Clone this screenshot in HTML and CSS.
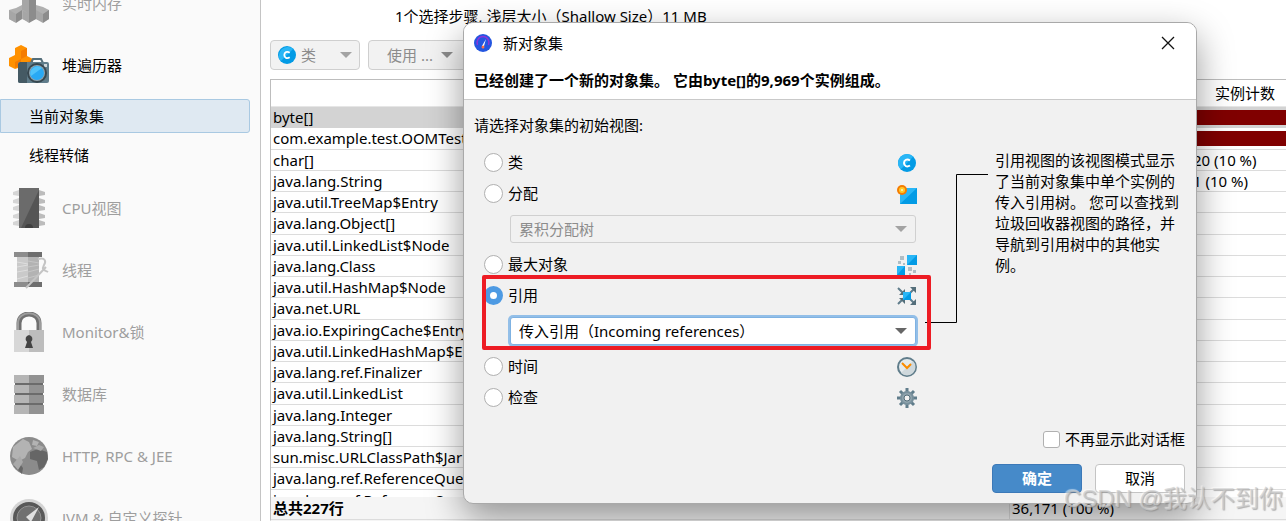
FILE: index.html
```html
<!DOCTYPE html>
<html lang="zh-CN">
<head>
    <meta charset="UTF-8">
    <meta name="viewport" content="width=device-width, initial-scale=1.0">
    <title>新对象集</title>
    <link rel="stylesheet" href="styles.css">
</head>
<body>
    <div class="app">
        <nav class="sidebar">
            <a href="#" class="nav-item">
                <svg class="nav-icon" viewBox="0 0 40 40">
                    <path fill="#b0b0b0" d="M7 25l6-3V12l7-4 7 4v10l7 2 6 3v9l-6 3-7-3-7 3-7-3-7 3-6-3v-9z"/>
                    <path fill="#a6a6a6" d="M13 12l7 4v15l-7-4zM7 31l-7-4v9l7 4zM20 31l-6-4v9l6 4zM34 31l-7-4v9l7 4z"/>
                    <path fill="#8c8c8c" d="M27 12l-7 4v15l7-4zM7 31l6-4v9l-6 4zM20 31l7-4v9l-7 4zM34 31l6-4v9l-6 4z"/>
                </svg>
                <span>实时内存</span>
            </a>
            <a href="#" class="nav-item active">
                <svg class="nav-icon" viewBox="0 0 40 40">
                    <path fill="#ff9100" d="M12 0l6 3v8l6 3v6l-6 4-6-2-6 2-6-3v-8l6-3V3z"/>
                    <path fill="#f57c00" d="M12 6l6-3v8l-6 3zM6 17l6-3v6l-6 3zM18 17l6-3v6l-6 4z"/>
                    <path fill="none" stroke="#546e7a" stroke-width="2" d="M22 18l2-4h8l2 4"/>
                    <rect x="9" y="17" width="31" height="21" rx="2" fill="#607d8b"/>
                    <path fill="#455a64" d="M11 17h7v21h-7a2 2 0 0 1-2-2V19z"/>
                    <rect x="35" y="19" width="3" height="3" fill="#cfd8dc"/>
                    <circle cx="28" cy="28" r="10" fill="#37474f"/>
                    <circle cx="28" cy="28" r="8" fill="#90a4ae"/>
                    <circle cx="28" cy="28" r="7" fill="#29a9f4"/>
                    <path fill="#50c3fa" d="M22 31a7 7 0 0 1 11-8z"/>
                </svg>
                <span>堆遍历器</span>
            </a>
            <a href="#" class="nav-sub selected">当前对象集</a>
            <a href="#" class="nav-sub">线程转储</a>
            <a href="#" class="nav-item">
                <svg class="nav-icon" viewBox="0 0 40 40">
                    <path fill="#d5d5d5" d="M10 2v6l-6-1V4zM10 10v6l-6-1v-3zM10 17v6l-6-1v-3zM10 25v6l-6-1v-3zM10 32v6l-6-1v-3z"/>
                    <path fill="#bcbcbc" d="M30 2v6l6-1V4zM30 10v6l6-1v-3zM30 17v6l6-1v-3zM30 25v6l6-1v-3zM30 32v6l6-1v-3z"/>
                    <rect x="10" width="20" height="40" fill="#555"/>
                    <path fill="#6b6b6b" d="M10 0h20v2L12 40h-2z"/>
                    <path fill="#3f3f3f" d="M16 40a4 4 0 0 1 8 0z"/>
                </svg>
                <span>CPU视图</span>
            </a>
            <a href="#" class="nav-item">
                <svg class="nav-icon" viewBox="0 0 40 40">
                    <rect x="8" y="7" width="11" height="26" fill="#cacaca"/>
                    <rect x="19" y="7" width="11" height="26" fill="#b3b3b3"/>
                    <path fill="none" stroke="#dedede" d="M8 12l11 2M8 17l11-2M8 22l11-2M8 29l11-3"/>
                    <path fill="none" stroke="#c6c6c6" d="M19 11l11 2M19 17l11-2M19 22l11-3M19 28l11-3"/>
                    <path fill="#8c8c8c" d="M5 2h14v5H5zM5 32h14v5H5z"/>
                    <path fill="#6e6e6e" d="M19 2h14v5H19zM19 32h14v5H19z"/>
                    <path fill="none" stroke="#c4c4c4" stroke-width="2" d="M29 9c8-2 8 3 6 6-3 6 1 5 4 7M17 38l20-21"/>
                </svg>
                <span>线程</span>
            </a>
            <a href="#" class="nav-item">
                <svg class="nav-icon" viewBox="0 0 40 40">
                    <path fill="none" stroke="#707070" stroke-width="5" d="M10 20V11c0-12 20-12 20 0v9"/>
                    <path fill="none" stroke="#9c9c9c" stroke-width="2" d="M9 18v-7c0-13 22-13 22 0v7"/>
                    <rect x="5" y="18" width="15" height="22" fill="#d7d7d7"/>
                    <rect x="20" y="18" width="15" height="22" fill="#bdbdbd"/>
                    <path fill="#444" d="M20 23a4 4 0 0 1 2 7l2 6h-8l2-6a4 4 0 0 1 2-7z"/>
                </svg>
                <span>Monitor&amp;锁</span>
            </a>
            <a href="#" class="nav-item">
                <svg class="nav-icon" viewBox="0 0 40 40">
                    <path fill="#6b6b6b" d="M6 8h28v24H6z"/>
                    <path fill="#b5b5b5" d="M5 1h15v8H5zM5 11h15v8H5zM5 21h15v8H5zM5 31h15v9H5z"/>
                    <path fill="#929292" d="M20 1h15v8H20zM20 11h15v8H20zM20 21h15v8H20zM20 31h15v9H20z"/>
                </svg>
                <span>数据库</span>
            </a>
            <a href="#" class="nav-item">
                <svg class="nav-icon" viewBox="0 0 40 40">
                    <circle cx="20" cy="20" r="19" fill="#8b8b8b"/>
                    <path fill="#b3b3b3" d="M4 11L14 3l6 3 3 7-4 3-3 6-6 3-7-4zM24 4l6 2-2 4-5-1z"/>
                    <path fill="#666" d="M21 16l8-3 9 3 1 7-4 8-5 3-2-9-7-2zM5 30l6-2 3 4-1 6z"/>
                    <path fill="#a9a9a9" d="M24 12l6-3 5 2-3 4zM4 28l7-8 3 6-5 8z"/>
                </svg>
                <span>HTTP, RPC &amp; JEE</span>
            </a>
            <a href="#" class="nav-item">
                <svg class="nav-icon" viewBox="0 0 40 40">
                    <circle cx="20" cy="20" r="19" fill="#d4d4d4"/>
                    <circle cx="20" cy="20" r="16" fill="#585858"/>
                    <circle cx="20" cy="20" r="12" fill="#707070" stroke="#929292"/>
                    <path fill="#e0e0e0" d="M30 9L17 19l5 5z"/>
                </svg>
                <span>JVM &amp; 自定义探针</span>
            </a>
        </nav>

        <main class="content">
            <div class="summary">1个选择步骤, 浅层大小（Shallow Size）11 MB</div>
            <div class="toolbar">
                <button type="button" class="tool-btn" disabled>
                    <svg class="class-icon" viewBox="0 0 20 20">
                        <circle cx="10" cy="10" r="10" fill="#039be5"/>
                        <path fill="#29b6f6" d="M3 17A10 10 0 0 1 17 3z"/>
                        <path fill="none" stroke="#fff" stroke-width="2" d="M13 7.500C10 5.500 7 7 7 10s3 4.500 6 2.500"/>
                    </svg>
                    <span>类</span>
                    <i class="arrow"></i>
                </button>
                <button type="button" class="tool-btn wide" disabled>
                    <span>使用 ...</span>
                    <i class="arrow dark"></i>
                </button>
            </div>
            <div class="grid">
                <div class="grid-scroll">
                    <table class="objects">
                        <colgroup><col class="col-name"><col class="col-count"></colgroup>
                        <thead>
                            <tr><th></th><th>实例计数</th></tr>
                        </thead>
                        <tbody>
                            <tr class="current"><td>byte[]</td><td><div class="bar"></div></td></tr>
                            <tr><td>com.example.test.OOMTest</td><td><div class="bar"></div></td></tr>
                            <tr><td>char[]</td><td><span class="count">20 (10 %)</span></td></tr>
                            <tr><td>java.lang.String</td><td><span class="count">1 (10 %)</span></td></tr>
                            <tr><td>java.util.TreeMap$Entry</td><td></td></tr>
                            <tr><td>java.lang.Object[]</td><td></td></tr>
                            <tr><td>java.util.LinkedList$Node</td><td></td></tr>
                            <tr><td>java.lang.Class</td><td></td></tr>
                            <tr><td>java.util.HashMap$Node</td><td></td></tr>
                            <tr><td>java.net.URL</td><td></td></tr>
                            <tr><td>java.io.ExpiringCache$Entry</td><td></td></tr>
                            <tr><td>java.util.LinkedHashMap$Entry</td><td></td></tr>
                            <tr><td>java.lang.ref.Finalizer</td><td></td></tr>
                            <tr><td>java.util.LinkedList</td><td></td></tr>
                            <tr><td>java.lang.Integer</td><td></td></tr>
                            <tr><td>java.lang.String[]</td><td></td></tr>
                            <tr><td>sun.misc.URLClassPath$JarLoader</td><td></td></tr>
                            <tr><td>java.lang.ref.ReferenceQueue</td><td></td></tr>
                            <tr><td>java.lang.ref.ReferenceQueue$Lock</td><td></td></tr>
                        </tbody>
                    </table>
                </div>
                <table class="objects totals">
                    <colgroup><col class="col-name"><col class="col-count"></colgroup>
                    <tbody>
                        <tr><td><b>总共227行</b></td><td>36,171 (100 %)</td></tr>
                    </tbody>
                </table>
            </div>
        </main>
    </div>

    <form class="dialog" role="dialog" aria-labelledby="dialog-title">
        <header class="dialog-header">
            <div class="title-bar">
                <svg class="app-icon" viewBox="0 0 18 18">
                    <circle cx="9" cy="9" r="9" fill="#2456e0"/>
                    <path fill="none" stroke="#8d35d8" stroke-width="1.500" d="M3.500 11a6 6 0 1 1 11 0"/>
                    <path fill="#fff" d="M12 5l-2 7H8z"/>
                    <circle cx="9" cy="13" r="1.500" fill="#ff7043"/>
                </svg>
                <span id="dialog-title">新对象集</span>
                <button type="button" class="close" aria-label="关闭">
                    <svg viewBox="0 0 14 14"><path fill="none" stroke="#111" stroke-width="1.300" d="M1 1l12 12M13 1L1 13"/></svg>
                </button>
            </div>
            <p class="message">已经创建了一个新的对象集。 它由byte[]的9,969个实例组成。</p>
        </header>

        <div class="dialog-body">
            <div class="options">
                <p class="prompt">请选择对象集的初始视图:</p>
                <div class="option">
                    <input type="radio" name="view" id="view-class"><label for="view-class">类</label>
                    <svg class="option-icon" viewBox="0 0 20 20">
                        <circle cx="10" cy="10" r="9" fill="#039be5"/>
                        <path fill="#29b6f6" d="M3.600 16.400A9 9 0 0 1 16.400 3.600z"/>
                        <path fill="none" stroke="#fff" stroke-width="2" d="M13 7.500C10 5.500 7 7 7 10s3 4.500 6 2.500"/>
                    </svg>
                </div>
                <div class="option">
                    <input type="radio" name="view" id="view-alloc"><label for="view-alloc">分配</label>
                    <svg class="option-icon" viewBox="0 0 20 20">
                        <path fill="#039be5" d="M3 4h17v16H3z"/>
                        <path fill="#29b6f6" d="M3 4h17L3 20z"/>
                        <circle cx="5" cy="6" r="5" fill="#f57c00"/>
                        <circle cx="5" cy="6" r="3" fill="#ffca28"/>
                        <circle cx="5" cy="6" r="1" fill="#fff3c0"/>
                    </svg>
                </div>
                <div class="select-box disabled">
                    <select aria-label="分配" disabled><option>累积分配树</option></select>
                    <i class="arrow"></i>
                </div>
                <div class="option">
                    <input type="radio" name="view" id="view-biggest"><label for="view-biggest">最大对象</label>
                    <svg class="option-icon" viewBox="0 0 20 20">
                        <path fill="#039be5" d="M10 0h10v10H10zM0 11h8v9H0z"/>
                        <path fill="#29b6f6" d="M10 0h10L10 10zM0 11h8l-8 9z"/>
                        <path fill="#b0bec5" d="M3 1h4v4H3zM1 6h3v3H1zM6 8h2v2H6zM11 12h4v4h-4zM16 15h3v3h-3zM12 18h2v2h-2z"/>
                    </svg>
                </div>
                <div class="highlighted">
                    <div class="option">
                        <input type="radio" name="view" id="view-refs" checked><label for="view-refs">引用</label>
                        <svg class="option-icon" viewBox="0 0 20 20">
                            <path stroke="#607d8b" stroke-width="2" d="M1 2l6 6M12 8l6-6M1 18l6-6M12 12l6 6"/>
                            <path fill="#546e7a" d="M8 3v6H2zM19 1v6l-6-6zM2 12h6v6zM19 19h-6l6-6z"/>
                            <path fill="#039be5" d="M6 6h8v8H6z"/>
                            <path fill="#29b6f6" d="M6 6h8l-8 8z"/>
                        </svg>
                    </div>
                    <div class="select-box focused">
                        <select aria-label="引用"><option>传入引用（Incoming references）</option></select>
                        <i class="arrow dark"></i>
                    </div>
                </div>
                <div class="option">
                    <input type="radio" name="view" id="view-time"><label for="view-time">时间</label>
                    <svg class="option-icon" viewBox="0 0 20 20">
                        <circle cx="10" cy="10" r="9" fill="#e4eaed" stroke="#607d8b" stroke-width="2"/>
                        <path fill="#cfd8dc" d="M4 16A8 8 0 0 0 16 4z"/>
                        <path fill="none" stroke="#fb8c00" stroke-width="2" d="M5 6l5 5 4-4"/>
                    </svg>
                </div>
                <div class="option">
                    <input type="radio" name="view" id="view-inspect"><label for="view-inspect">检查</label>
                    <svg class="option-icon" viewBox="0 0 20 20">
                        <path stroke="#607d8b" stroke-width="3" d="M10 0v20M0 10h20M3 3l14 14M17 3L3 17"/>
                        <circle cx="10" cy="10" r="7" fill="#78909c"/>
                        <circle cx="10" cy="10" r="5" fill="#90a4ae"/>
                        <circle cx="10" cy="10" r="3" fill="#f1f1f1" stroke="#546e7a"/>
                    </svg>
                </div>
            </div>

            <svg class="connector" viewBox="0 0 64 150">
                <path fill="none" stroke="#000" d="M0 149.500H31.500V1.500H63"/>
            </svg>

            <p class="help">引用视图的该视图模式显示了当前对象集中单个实例的传入引用树。 您可以查找到垃圾回收器视图的路径，并导航到引用树中的其他实例。</p>
        </div>

        <footer class="dialog-footer">
            <div class="remember">
                <input type="checkbox" id="dont-show"><label for="dont-show">不再显示此对话框</label>
            </div>
            <div class="buttons">
                <button type="submit" class="btn primary">确定</button>
                <button type="button" class="btn">取消</button>
            </div>
        </footer>
    </form>

    <div class="watermark">CSDN @我认不到你</div>
</body>
</html>
```
FILE: styles.css
```css
* {
    box-sizing: border-box;
}

body {
    margin: 0;
    height: 100vh;
    overflow: hidden;
    position: relative;
    background: #fff;
    color: #000;
    font-family: "Noto Sans", "Noto Sans CJK SC", sans-serif;
    font-size: 15px;
    line-height: 21px;
}

p {
    margin: 0;
}

button,
select,
input {
    font: inherit;
    margin: 0;
}

.app {
    display: flex;
    height: 100%;
    overflow: hidden;
}

/* Sidebar */
.sidebar {
    flex: 0 0 261px;
    margin-top: -28px;
    background: #fafafa;
    border-right: 1px solid #c4c4c4;
}

.nav-item {
    display: flex;
    align-items: center;
    gap: 13px;
    height: 62px;
    padding-left: 9px;
    color: #9e9e9e;
    text-decoration: none;
}

.nav-item.active {
    color: #000;
}

.nav-icon {
    width: 40px;
    height: 40px;
}

.nav-sub {
    display: flex;
    align-items: center;
    height: 34px;
    margin: 3px 10px 5px 0;
    padding-left: 28px;
    border: 1px solid transparent;
    color: #000;
    text-decoration: none;
}

.nav-sub.selected {
    background: #dfe9f2;
    border-color: #a9c9e2;
    border-radius: 0 3px 3px 0;
}

/* Main area */
.content {
    flex: 1;
    min-width: 0;
    display: flex;
    flex-direction: column;
    padding: 6px 0 0 9px;
    overflow: hidden;
}

.summary {
    padding-left: 125px;
    white-space: nowrap;
}

.toolbar {
    display: flex;
    gap: 8px;
    padding: 13px 0 9px;
}

.tool-btn {
    display: flex;
    align-items: center;
    gap: 5px;
    width: 90px;
    height: 30px;
    padding: 0 7px;
    border: 1px solid #cfcfcf;
    border-radius: 4px;
    background: #f2f2f2;
    color: #8c8c8c;
}

.tool-btn.wide {
    width: 100px;
    padding: 0 14px 0 18px;
}

.tool-btn .arrow {
    margin-left: auto;
}

.class-icon {
    width: 18px;
    height: 18px;
}

.arrow {
    border: 6px solid transparent;
    border-top-color: #a3a3a3;
    border-bottom: 0;
}

.arrow.dark {
    border-top-color: #666;
}

.tool-btn .arrow.dark {
    border-top-color: #8c8c8c;
}

.grid {
    flex: 1;
    min-height: 0;
    display: flex;
    flex-direction: column;
    border: 1px solid #bdbdbd;
    border-right: 0;
    border-bottom-color: #f5f5f5;
}

.grid-scroll {
    flex: 1;
    min-height: 0;
    overflow: hidden;
}

.objects {
    width: 1210px;
    table-layout: fixed;
    border-collapse: separate;
    border-spacing: 0;
}

.objects tbody {
    height: 404px;
}

.col-name {
    width: 738px;
}

.objects th {
    height: 27px;
    padding: 0;
    border-bottom: 1px solid #e6e6e6;
    font-weight: normal;
}

.objects td {
    height: 21px;
    padding: 0 2px;
    border-bottom: 1px solid #dcdcdc;
    line-height: 20px;
    white-space: nowrap;
}

.objects .current td {
    background: #d3d3d3;
    border-color: #d3d3d3;
}

.bar {
    height: 15px;
    background: #800000;
}

.count {
    padding-left: 182px;
}

.objects.totals tbody {
    height: 23px;
}

.totals {
    background: #f5f5f5;
}

.totals td + td {
    border-left: 1px solid #dcdcdc;
}

/* Dialog */
.dialog {
    position: absolute;
    top: 22px;
    left: 463px;
    right: 89px;
    border: 1px solid #a9a9a9;
    border-radius: 10px;
    background: #f1f1f1;
    box-shadow: 0 14px 36px rgba(0, 0, 0, 0.4);
}

.dialog-header {
    padding: 5px 10px 8px;
    border-bottom: 1px solid #c9c9c9;
    border-radius: 9px 9px 0 0;
    background: #fff;
}

.title-bar {
    display: flex;
    align-items: center;
    gap: 11px;
    height: 30px;
    padding-right: 4px;
}

.app-icon {
    width: 18px;
    height: 18px;
}

.close {
    display: flex;
    align-items: center;
    justify-content: center;
    width: 28px;
    height: 28px;
    margin-left: auto;
    padding: 0;
    border: 0;
    background: none;
}

.close svg {
    width: 14px;
    height: 14px;
}

.message {
    padding-top: 12px;
    font-weight: bold;
}

.dialog-body {
    display: flex;
    padding: 15px 11px 0 10px;
}

.options {
    flex: 1;
}

.prompt {
    padding-bottom: 11px;
}

.option {
    display: flex;
    align-items: center;
    gap: 5px;
    height: 31px;
    padding-left: 10px;
}

.option-icon {
    width: 20px;
    height: 20px;
    margin-left: auto;
}

input[type="radio"] {
    appearance: none;
    width: 19px;
    height: 19px;
    border: 1px solid #b0b0b0;
    border-radius: 50%;
    background: #fff;
}

input[type="radio"]:checked {
    border: 6px solid #4d9ae3;
}

.select-box {
    display: flex;
    align-items: center;
    position: relative;
    height: 28px;
    margin: 6px 1px 6px 36px;
}

.select-box select {
    appearance: none;
    width: 100%;
    height: 100%;
    padding: 0 8px;
    border: 1px solid #c4c4c4;
    border-radius: 3px;
    background: #fff;
    color: #000;
    outline: none;
}

.select-box.disabled select {
    border-color: #d0d0d0;
    background: #f1f1f1;
    color: #8c8c8c;
    opacity: 1;
}

.select-box.focused select {
    border-color: #7fb2e2;
    box-shadow: 0 0 0 2px #93bfe8;
}

.select-box .arrow {
    position: absolute;
    right: 9px;
    pointer-events: none;
}

.highlighted {
    position: relative;
}

/* red frame drawn over the chosen view */
.highlighted::after {
    content: "";
    position: absolute;
    inset: -5px -14px -5px 8px;
    border: 4px solid #ed1c24;
    border-radius: 2px;
    pointer-events: none;
}

.connector {
    flex: none;
    width: 64px;
    height: 150px;
    margin: 58px 6px 0 8px;
}

.help {
    flex: 0 0 190px;
    padding-top: 35px;
}

.dialog-footer {
    display: flex;
    flex-direction: column;
    align-items: flex-end;
    gap: 14px;
    padding: 16px 11px 10px;
}

.remember {
    display: flex;
    align-items: center;
    gap: 5px;
}

input[type="checkbox"] {
    appearance: none;
    width: 17px;
    height: 17px;
    border: 1px solid #b0b0b0;
    border-radius: 3px;
    background: #fff;
}

.buttons {
    display: flex;
    gap: 13px;
}

.btn {
    width: 90px;
    height: 29px;
    padding: 0;
    border: 1px solid #c4c4c4;
    border-radius: 4px;
    background: #fff;
    color: #000;
}

.btn.primary {
    border-color: #3c79b8;
    background: #468ac9;
    color: #fff;
    font-weight: bold;
}

.watermark {
    position: absolute;
    right: 3px;
    bottom: 6px;
    color: rgba(205, 205, 205, 0.7);
    font-family: "Liberation Sans", "Noto Sans CJK SC", sans-serif;
    font-size: 24px;
    line-height: 32px;
    text-shadow: 1px 1px 1px rgba(130, 130, 130, 0.6), -1px -1px 1px rgba(255, 255, 255, 0.5);
    pointer-events: none;
}
```
